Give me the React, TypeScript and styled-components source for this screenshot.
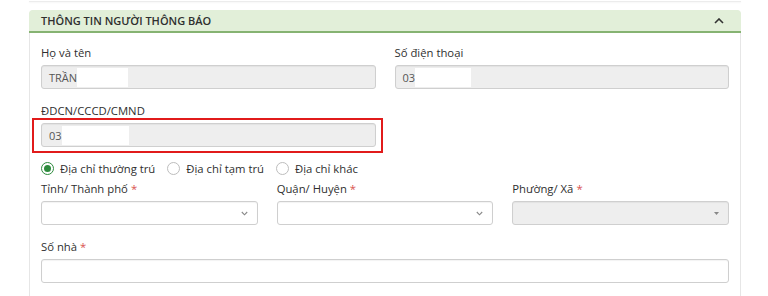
import React, { FC } from "react";
import styled, { createGlobalStyle } from "styled-components";

const colors = {
  text: "#2f2f2f",
  inputText: "#555555",
  border: "#cfcfcf",
  disabled: "#eeeeee",
  headerBg: "#e2efd9",
  headerLine: "#86b372",
  panelLine: "#e6e6e6",
  green: "#2e8b3e",
  red: "#d9534f",
  mark: "#e11b1b"
};

const GlobalStyle = createGlobalStyle`
  html, body {
    margin: 0;
    padding: 0;
    background: #ffffff;
    font-family: "Open Sans", "Liberation Sans", sans-serif;
    font-size: 11px;
    color: ${colors.text};
  }
  * { box-sizing: border-box; }
`;

const Page = styled.div`
  width: 768px;
  height: 296px;
  overflow: hidden;
  padding: 0 27px 0 29px;
`;

const PrevPanelEdge = styled.div`
  height: 2px;
  border-bottom: 1px solid #ececec;
  box-shadow: 0 1px 2px rgba(0, 0, 0, 0.04);
  margin-bottom: 8px;
`;

const Panel = styled.section`
  border: 1px solid ${colors.panelLine};
  border-bottom: none;
  border-radius: 5px 5px 0 0;
  height: 320px;
`;

const PanelHeader = styled.header`
  height: 23px;
  display: flex;
  align-items: center;
  justify-content: space-between;
  padding: 0 17px 0 11px;
  background: ${colors.headerBg};
  border-bottom: 2px solid ${colors.headerLine};
  border-radius: 4px 4px 0 0;
  margin: -1px -1px 0;
`;

const PanelTitle = styled.h3`
  margin: 0;
  font-size: 11px;
  font-weight: 600;
  text-transform: uppercase;
  color: ${colors.text};
  padding-left: 1px;
`;

const Body = styled.div`
  padding: 11px 11px 0;
`;

const Grid = styled.div<{ cols: number }>`
  display: grid;
  grid-template-columns: repeat(${(p) => p.cols}, 1fr);
  column-gap: 19px;
  margin-bottom: 13px;
`;

const Field = styled.div`
  display: flex;
  flex-direction: column;
`;

const Label = styled.label`
  line-height: 18px;
  font-size: 11.3px;
  color: ${colors.text};
  margin-bottom: 3px;
`;

const Req = styled.span`
  color: ${colors.red};
  margin-left: 3px;
`;

const InputWrap = styled.div`
  position: relative;
`;

const Input = styled.div<{ disabled?: boolean }>`
  height: 24px;
  display: flex;
  align-items: center;
  padding: 0 7px;
  border: 1px solid ${colors.border};
  border-radius: 3px;
  background: ${(p) => (p.disabled ? colors.disabled : "#ffffff")};
  box-shadow: inset 0 1px 1px rgba(0, 0, 0, 0.05);
  font-size: 11px;
  color: ${colors.inputText};
`;

const Mask = styled.span<{ w: number }>`
  display: inline-block;
  width: ${(p) => p.w}px;
  height: 19px;
  background: #ffffff;
`;

const Highlight = styled.div`
  position: absolute;
  left: -9px;
  right: -7px;
  top: -5px;
  bottom: -6px;
  border: 2px solid ${colors.mark};
  pointer-events: none;
`;

const Select = styled(Input)`
  justify-content: flex-end;
  padding-right: 9px;
`;

const RadioRow = styled.div`
  display: flex;
  align-items: center;
  gap: 12px;
  height: 17px;
  margin-bottom: 3px;
`;

const RadioItem = styled.label`
  display: flex;
  align-items: center;
  gap: 6px;
  font-size: 11.3px;
  color: ${colors.text};
`;

const RadioDot = styled.span<{ checked?: boolean }>`
  width: 13px;
  height: 13px;
  border-radius: 50%;
  border: 1px solid ${(p) => (p.checked ? colors.green : "#bdbdbd")};
  background: #ffffff;
  display: flex;
  align-items: center;
  justify-content: center;
  &::after {
    content: "";
    width: 7px;
    height: 7px;
    border-radius: 50%;
    background: ${(p) => (p.checked ? colors.green : "transparent")};
  }
`;

const ChevronUp: FC = () => (
  <svg width="10" height="6" viewBox="0 0 10 6">
    <polyline
      points="1,5 5,1 9,5"
      fill="none"
      stroke="#333"
      strokeWidth="1.6"
    />
  </svg>
);

const ChevronDown: FC = () => (
  <svg width="7" height="5" viewBox="0 0 7 5">
    <polyline
      points="0.8,1 3.5,3.8 6.2,1"
      fill="none"
      stroke="#888"
      strokeWidth="1.1"
    />
  </svg>
);

const Caret: FC = () => (
  <svg width="5" height="3" viewBox="0 0 5 3">
    <polygon points="0,0 5,0 2.5,3" fill="#888" />
  </svg>
);

const App: FC = () => {
  return (
    <>
      <GlobalStyle />
      <Page>
        <PrevPanelEdge />
        <Panel>
          <PanelHeader>
            <PanelTitle>Thông tin người thông báo</PanelTitle>
            <ChevronUp />
          </PanelHeader>
          <Body>
            <Grid cols={2}>
              <Field>
                <Label>Họ và tên</Label>
                <Input disabled>
                  TRẦN
                  <Mask w={51} />
                </Input>
              </Field>
              <Field>
                <Label>Số điện thoại</Label>
                <Input disabled>
                  03
                  <Mask w={56} />
                </Input>
              </Field>
            </Grid>
            <Grid cols={2}>
              <Field>
                <Label>ĐDCN/CCCD/CMND</Label>
                <InputWrap>
                  <Input disabled>
                    03
                    <Mask w={67} />
                  </Input>
                  <Highlight />
                </InputWrap>
              </Field>
            </Grid>
            <RadioRow>
              <RadioItem>
                <RadioDot checked />
                Địa chỉ thường trú
              </RadioItem>
              <RadioItem>
                <RadioDot />
                Địa chỉ tạm trú
              </RadioItem>
              <RadioItem>
                <RadioDot />
                Địa chỉ khác
              </RadioItem>
            </RadioRow>
            <Grid cols={3}>
              <Field>
                <Label>
                  Tỉnh/ Thành phố<Req>*</Req>
                </Label>
                <Select>
                  <ChevronDown />
                </Select>
              </Field>
              <Field>
                <Label>
                  Quận/ Huyện<Req>*</Req>
                </Label>
                <Select>
                  <ChevronDown />
                </Select>
              </Field>
              <Field>
                <Label>
                  Phường/ Xã<Req>*</Req>
                </Label>
                <Select disabled>
                  <Caret />
                </Select>
              </Field>
            </Grid>
            <Grid cols={1}>
              <Field>
                <Label>
                  Số nhà<Req>*</Req>
                </Label>
                <Input />
              </Field>
            </Grid>
          </Body>
        </Panel>
      </Page>
    </>
  );
};

export default App;
